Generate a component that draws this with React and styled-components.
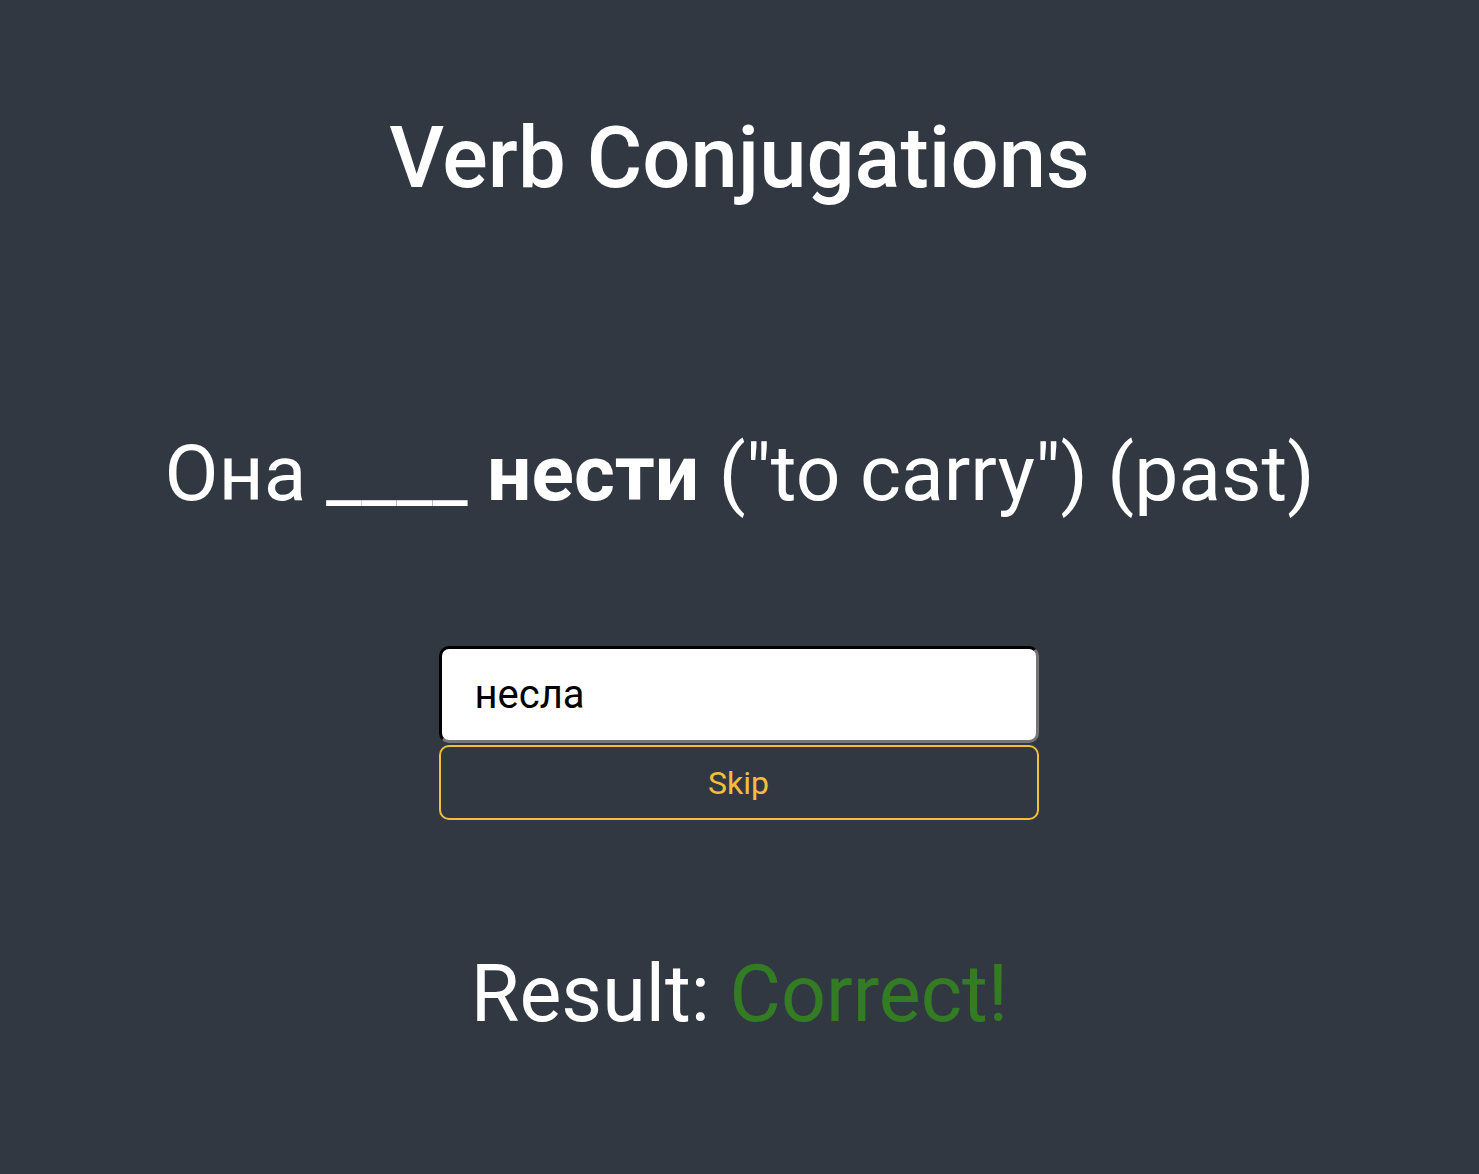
import { createGlobalStyle, styled } from 'styled-components';

const GlobalStyle = createGlobalStyle`
  html, body {
    margin: 0;
    padding: 0;
    background: #323842;
  }
  body {
    font-family: Roboto, "Noto Sans", sans-serif;
    color: #ffffff;
  }
`;

const Page = styled.main`
  min-height: 1174px;
  display: flex;
  flex-direction: column;
  align-items: center;
  box-sizing: border-box;
  padding-top: 108px;
`;

const Title = styled.h1`
  margin: 0;
  font-size: 85px;
  font-weight: 500;
  line-height: 100px;
`;

const Prompt = styled.p`
  margin: 215px 0 0;
  font-size: 78.5px;
  font-weight: 400;
  line-height: 100px;

  strong {
    font-weight: 700;
  }
`;

const Form = styled.form`
  margin-top: 123px;
  width: 600px;
  display: flex;
  flex-direction: column;
  gap: 2px;
  transform: translateX(-1px);
`;

const Answer = styled.input`
  box-sizing: border-box;
  height: 97px;
  width: 100%;
  padding: 0 33px;
  border: 3px inset #767676;
  border-top-color: #1e1e1e;
  border-left-color: #1e1e1e;
  border-radius: 10px;
  background: #fff;
  font-family: Roboto, "Noto Sans", sans-serif;
  font-size: 40px;
  color: #000;
  outline: none;
`;

const SkipButton = styled.button`
  box-sizing: border-box;
  height: 75px;
  width: 100%;
  border: 2px solid #f3bf3a;
  border-radius: 10px;
  background: transparent;
  color: #f3bf3a;
  font-family: Roboto, "Noto Sans", sans-serif;
  font-size: 32px;
  cursor: pointer;
`;

const Result = styled.p`
  margin: 124px 0 0;
  font-size: 79px;
  line-height: 100px;
`;

const Verdict = styled.span`
  color: ${(p) => (p.$ok ? '#347c24' : '#c0392b')};
`;

export default function App() {
  return (
    <>
      <GlobalStyle />
      <Page>
        <Title>Verb Conjugations</Title>
        <Prompt>
          Она ____ <strong>нести</strong> ("to carry") (past)
        </Prompt>
        <Form onSubmit={(e) => e.preventDefault()}>
          <Answer defaultValue="несла" />
          <SkipButton type="button">Skip</SkipButton>
        </Form>
        <Result>
          Result: <Verdict $ok>Correct!</Verdict>
        </Result>
      </Page>
    </>
  );
}
